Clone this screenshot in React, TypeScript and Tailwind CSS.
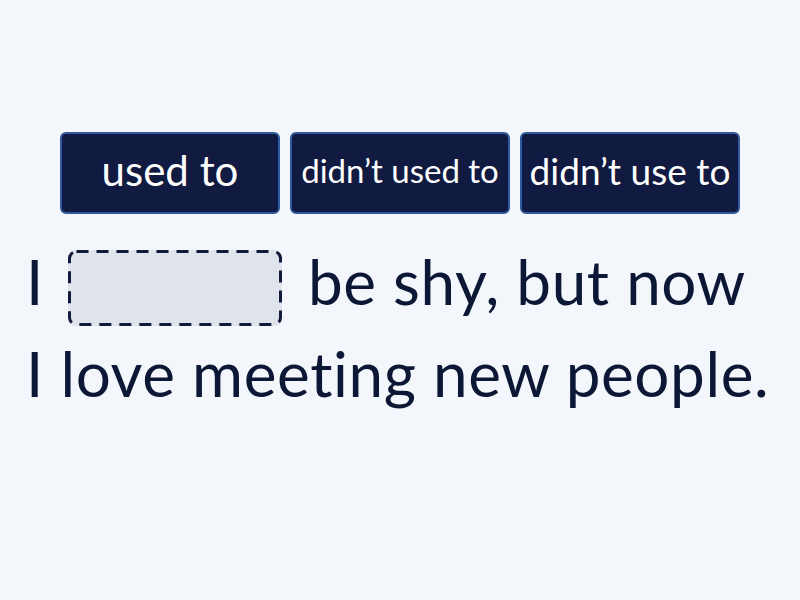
import React from 'react';

const options = [
  { label: 'used to', size: 'text-[42px]' },
  { label: 'didn’t used to', size: 'text-[33px]' },
  { label: 'didn’t use to', size: 'text-[37px]' },
];

const App: React.FC = () => {
  return (
    <div className="w-[800px] h-[600px] bg-[#f3f6fb] font-['Lato',sans-serif] overflow-hidden">
      <div className="flex justify-center gap-[10px] pt-[132px]">
        {options.map((opt) => (
          <div
            key={opt.label}
            className={`w-[220px] h-[82px] flex items-center justify-center rounded-[6px] border-2 border-[#2e5c9e] bg-[#111a40] text-white leading-none pb-[6px] ${opt.size}`}
          >
            {opt.label}
          </div>
        ))}
      </div>

      <div className="pl-[26px] pt-[21px] text-[#0b1735] text-[62px] leading-[92px] tracking-[0.6px]">
        <div className="flex items-center">
          <span>I</span>
          <span className="relative inline-block ml-[24px] mr-[26px] mt-[14px] w-[214px] h-[76px] rounded-[8px] bg-[#dfe3ec]">
            <svg className="absolute inset-0" width="214" height="76" viewBox="0 0 214 76">
              <rect
                x="1.5"
                y="1.5"
                width="211"
                height="73"
                rx="7"
                fill="none"
                stroke="#111a3a"
                strokeWidth="3"
                strokeDasharray="12 8"
              />
            </svg>
          </span>
          <span>be shy, but now</span>
        </div>
        <div>I love meeting new people.</div>
      </div>
    </div>
  );
};

export default App;
